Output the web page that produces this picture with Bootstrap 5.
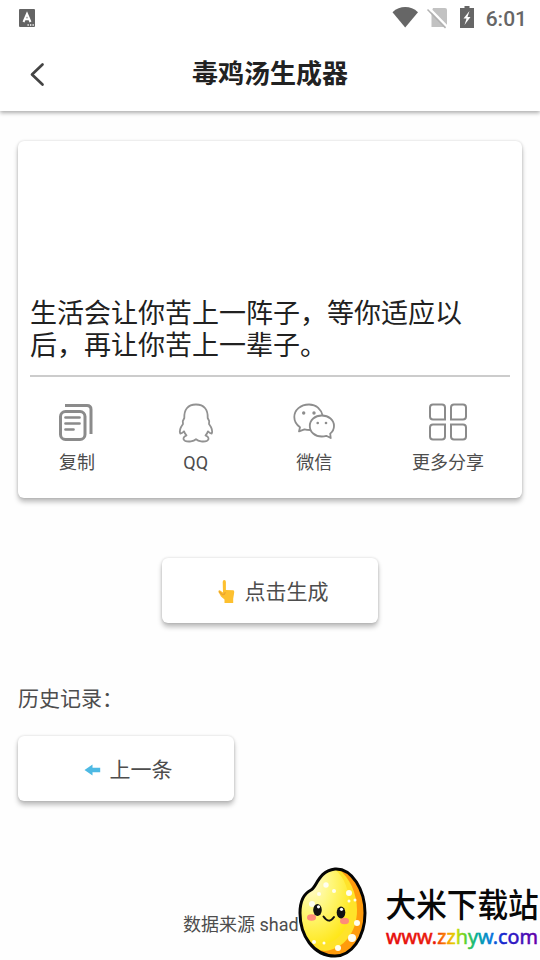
<!DOCTYPE html>
<html lang="zh-CN">
<head>
<meta charset="utf-8">
<meta name="viewport" content="width=device-width, initial-scale=1">
<title>毒鸡汤生成器</title>
<link rel="stylesheet" href="https://cdn.jsdelivr.net/npm/bootstrap@5.3.0/dist/css/bootstrap.min.css">
<style>
body{font-family:Roboto,"Noto Sans CJK SC",sans-serif;color:#4d4d4d;background:#fefefe;height:960px;overflow:hidden}
svg{display:block;flex-shrink:0}
.app-header{height:111px;box-shadow:0 2px 4px rgba(0,0,0,.32)}
.status-bar{height:36px;padding:0 13px 0 19px}
.clock{font-size:21px;font-weight:500;line-height:36px;color:#666;padding-top:2px}
.title-bar{height:75px}
.title-bar h1{font-size:26px;font-weight:700;line-height:38px;color:#222;padding-top:1px}
.raised{background:#fff;border-radius:6px;box-shadow:0 4px 5px rgba(0,0,0,.25),0 0 3px rgba(0,0,0,.16)}
.quote-card{height:357px;margin:30px 18px 0;padding:0 12px}
.quote-text{height:236px;padding-bottom:13px;font-size:27px;line-height:32px;color:#212121;border-bottom:2px solid #ccc}
.share-row{padding:22px 26px 0}
.share-item{min-width:42px;font-size:18px;line-height:26px}
.share-item svg{margin-bottom:5px}
.action{width:216px;height:65px;font-size:21px;border:0;color:#4d4d4d;padding-left:8px}
.action span{padding-top:4px}
.action svg{margin-top:2px}
.generate{margin:60px auto 0}
.history{margin:59px 18px 0;font-size:21px;line-height:34px}
.previous{margin:20px 18px 0}
.source{position:absolute;left:183px;top:912px;font-size:18px;line-height:26px;white-space:nowrap}
.site-mark{position:absolute;left:296px;top:864px}
</style>
<script src="https://cdn.jsdelivr.net/npm/bootstrap@5.3.0/dist/js/bootstrap.bundle.min.js"></script>
</head>
<body class="position-relative">
<header class="app-header bg-white">
  <div class="status-bar d-flex justify-content-between align-items-center">
    <svg width="16" height="18" viewBox="0 0 16 18"><rect width="16" height="18" rx="1" fill="#646464"/><path d="M4.500 13 8 4.800 11.500 13M5.700 10.300h4.600" fill="none" stroke="#fff" stroke-width="2"/><path d="M8.500 16h1.300M11 16h1.300M13.500 16h1.300" stroke="#fff" stroke-width="1.300"/></svg>
    <div class="d-flex align-items-center">
      <svg width="94" height="36" viewBox="0 0 94 36">
        <path d="M.5 12.200C8 5.400 18.500 5.400 26 12.200L13.200 27.500Z" fill="#666"/>
        <path d="M41 8h12q2 0 2 2v17H39.500V12Z" fill="#c2c2c2"/><path d="M37 8 55.500 27" stroke="#fff" stroke-width="2.500"/><path d="M35.500 9.500 53.500 28" stroke="#b2b2b2" stroke-width="1.500"/>
        <path d="M72.500 6h5v2H82v20H68V8h4.500Z" fill="#666"/><path d="m77.500 11-6 7.500h3l-2 6.500 6-8h-3Z" fill="#fff"/>
      </svg>
      <span class="clock">6:01</span>
    </div>
  </div>
  <div class="title-bar d-flex align-items-center justify-content-center position-relative">
    <svg class="position-absolute start-0 top-0" width="60" height="75" viewBox="0 0 60 75"><path d="M42.500 28.500 32 38.500l10.500 10" fill="none" stroke="#444" stroke-width="2.700" stroke-linecap="round" stroke-linejoin="round"/></svg>
    <h1 class="mb-0">毒鸡汤生成器</h1>
  </div>
</header>
<main>
  <section class="quote-card raised">
    <div class="quote-text d-flex align-items-end">生活会让你苦上一阵子，等你适应以后，再让你苦上一辈子。</div>
    <div class="share-row d-flex justify-content-between">
      <div class="share-item d-flex flex-column align-items-center">
        <svg width="42" height="46" viewBox="0 0 42 46" fill="none" stroke="#8b8b8b" stroke-width="3"><path d="M9 6.500h22q4 0 4 4V35"/><rect x="4.500" y="12.500" width="24.500" height="28" rx="5"/><path d="M9.500 18.500h14M9.500 24.500h14M9.500 30.500h8" stroke-linecap="round" stroke-width="2.700"/></svg>
        <span>复制</span>
      </div>
      <div class="share-item d-flex flex-column align-items-center">
        <svg width="42" height="46" viewBox="0 0 42 46" fill="none" stroke="#929292" stroke-width="1.800" stroke-linejoin="round"><path d="M21 5.500C12.500 5.500 9 11 9.300 19L7.800 22.200 8 25C5.400 28.500 4.100 32 5.300 34.500 6.500 34.700 7.600 33.700 9 32.300 9.500 34.300 10.300 35.200 11.500 36.300 8 37.800 7.500 40.500 10 41.800 13.500 43.200 18.500 42.300 21 40.300 23.500 42.300 28.500 43.200 32 41.800 34.500 40.500 34 37.800 30.500 36.300 31.700 35.200 32.500 34.300 33 32.300 34.400 33.700 35.500 34.700 36.700 34.500 37.900 32 36.600 28.500 34 25L34.200 22.200 32.700 19C33 11 29.500 5.500 21 5.500Z"/></svg>
        <span>QQ</span>
      </div>
      <div class="share-item d-flex flex-column align-items-center">
        <svg width="42" height="46" viewBox="0 0 42 46" fill="#fff" stroke="#8d8d8d" stroke-width="1.800" stroke-linejoin="round"><path d="M16 5.500C7.500 5.500 1.300 11 1.300 18 1.300 22.300 3.800 26 7 28.200L6 32.400 11.500 30.300C13 30.800 15 31 17.500 31L30 17.500C28.500 10.500 23.500 5.500 16 5.500Z"/><path d="M28.800 16.500C21.800 16.500 16.800 21 16.800 27S21.800 37.500 28.800 37.500C30.500 37.500 32 37.200 33.300 36.800L37.700 39 37.200 34.600C39.500 32.800 41 30 41 27 41 21 35.800 16.500 28.800 16.500Z"/><g fill="#8d8d8d" stroke="none"><circle cx="10.700" cy="14" r="1.700"/><circle cx="21" cy="14" r="1.700"/><circle cx="24.700" cy="24" r="1.300"/><circle cx="33" cy="24" r="1.300"/></g></svg>
        <span>微信</span>
      </div>
      <div class="share-item d-flex flex-column align-items-center">
        <svg width="42" height="46" viewBox="0 0 42 46" fill="none" stroke="#8b8b8b" stroke-width="2"><path d="M6 5.500h9q3 0 3 3v12H6q-3 0-3-3v-9q0-3 3-3ZM27 5.500h9q3 0 3 3v9q0 3-3 3H24v-12q0-3 3-3ZM6 25.500h12v12q0 3-3 3H6q-3 0-3-3v-9q0-3 3-3ZM24 25.500h12q3 0 3 3v9q0 3-3 3h-9q-3 0-3-3Z"/></svg>
        <span>更多分享</span>
      </div>
    </div>
  </section>
  <button type="button" class="action generate raised d-flex align-items-center justify-content-center">
    <svg width="27" height="30" viewBox="0 0 27 30"><path d="M8.700 5q0-2 1.600-2t1.600 2v8l7.500.3q1 .2.800 2.200l-1 6.200V26H10.500v-3.500L7 19.500 4.500 15q-.4-2 1.300-1.700L9 15.500Z" fill="#fdc02f"/><path d="m5 14.500 3.200 3q2.300.5 3.200-2.300" fill="none" stroke="#eda32d" stroke-width="1.300"/></svg>
    <span class="ms-1">点击生成</span>
  </button>
  <p class="history mb-0">历史记录：</p>
  <button type="button" class="action previous raised d-flex align-items-center justify-content-center">
    <svg width="20" height="20" viewBox="0 0 20 20"><path d="M2.500 10 10.500 4.500v3.200h7.700v4.600h-7.700v3.200Z" fill="#4db9e3"/></svg>
    <span class="ms-2">上一条</span>
  </button>
</main>
<footer>
  <div class="source">数据来源 shad</div>
  <svg class="site-mark" width="244" height="96" viewBox="0 0 244 96">
    <defs>
      <linearGradient id="rainbow" gradientUnits="userSpaceOnUse" x1="90" y1="0" x2="242" y2="0"><stop stop-color="#e40b0b"/><stop offset=".32" stop-color="#e91b09"/><stop offset=".4" stop-color="#ff9300"/><stop offset=".46" stop-color="#d8de00"/><stop offset=".53" stop-color="#52cf31"/><stop offset=".6" stop-color="#00aa9a"/><stop offset=".69" stop-color="#0878dd"/><stop offset=".77" stop-color="#1420cc"/><stop offset="1" stop-color="#6500a5"/></linearGradient>
      <radialGradient id="shell" cx=".3" cy=".25" r=".8"><stop stop-color="#fffbd0"/><stop offset=".45" stop-color="#fff77a"/><stop offset="1" stop-color="#ffe71b"/></radialGradient>
      <clipPath id="body-clip"><path d="M39 5C56 4 69 26 69 49 69 74 55 92 39 92 17 92 4 71 4 49 4 37 7 30 15 26 21 23 22 7 39 5Z"/></clipPath>
    </defs>
    <g clip-path="url(#body-clip)">
      <path d="M0 0h73v96H0Z" fill="#ff9b0d"/>
      <path d="M37 2C51 8 61 27 61 46 61 68 48 85 29 87 9 85 0 68 0 45V0Z" fill="#ffe32a"/>
      <path d="M34 2C46 8 54 25 54 44 54 63 43 78 28 80 9 80 0 65 0 45V0Z" fill="url(#shell)"/>
      <g fill="#fffef0"><circle cx="30" cy="21" r="2.700"/><circle cx="23" cy="30" r="2"/><circle cx="16" cy="40" r="3"/><circle cx="38" cy="27" r="2"/><circle cx="53" cy="29" r="3"/><circle cx="53" cy="37" r="1.500"/><circle cx="59" cy="36" r="1.500"/><circle cx="61" cy="59" r="3"/><circle cx="56" cy="74" r="4"/><circle cx="42" cy="84" r="3"/><circle cx="18" cy="78" r="2"/><circle cx="28" cy="79" r="1.500"/></g>
    </g>
    <path d="M39 5C56 4 69 26 69 49 69 74 55 92 39 92 17 92 4 71 4 49 4 37 7 30 15 26 21 23 22 7 39 5Z" fill="none" stroke="#050505" stroke-width="3"/>
    <ellipse cx="15.500" cy="53.500" rx="4.500" ry="3.300" fill="#ff8c78"/><ellipse cx="48.500" cy="57" rx="4.500" ry="3.300" fill="#ff8c78"/>
    <ellipse cx="21.500" cy="46" rx="4.300" ry="6" fill="#111"/><ellipse cx="45" cy="48.500" rx="4.300" ry="6" fill="#111"/>
    <g fill="#fff"><circle cx="22.500" cy="42.800" r="1.600"/><circle cx="45.500" cy="45.300" r="1.600"/></g>
    <path d="M27.500 52.500q5.500 8 10.500.5" fill="none" stroke="#111" stroke-width="2" stroke-linecap="round"/>
    <text transform="translate(89.500 52.500) scale(.915 1)" font-family="Noto Sans CJK SC, sans-serif" font-size="33.500" font-weight="500" fill="#080808">大米下载站</text>
    <text x="90" y="79.500" font-family="Noto Sans, sans-serif" font-size="20" font-weight="400" textLength="152" lengthAdjust="spacingAndGlyphs" fill="url(#rainbow)" stroke="url(#rainbow)" stroke-width=".5">www.zzhyw.com</text>
  </svg>
</footer>
</body>
</html>
